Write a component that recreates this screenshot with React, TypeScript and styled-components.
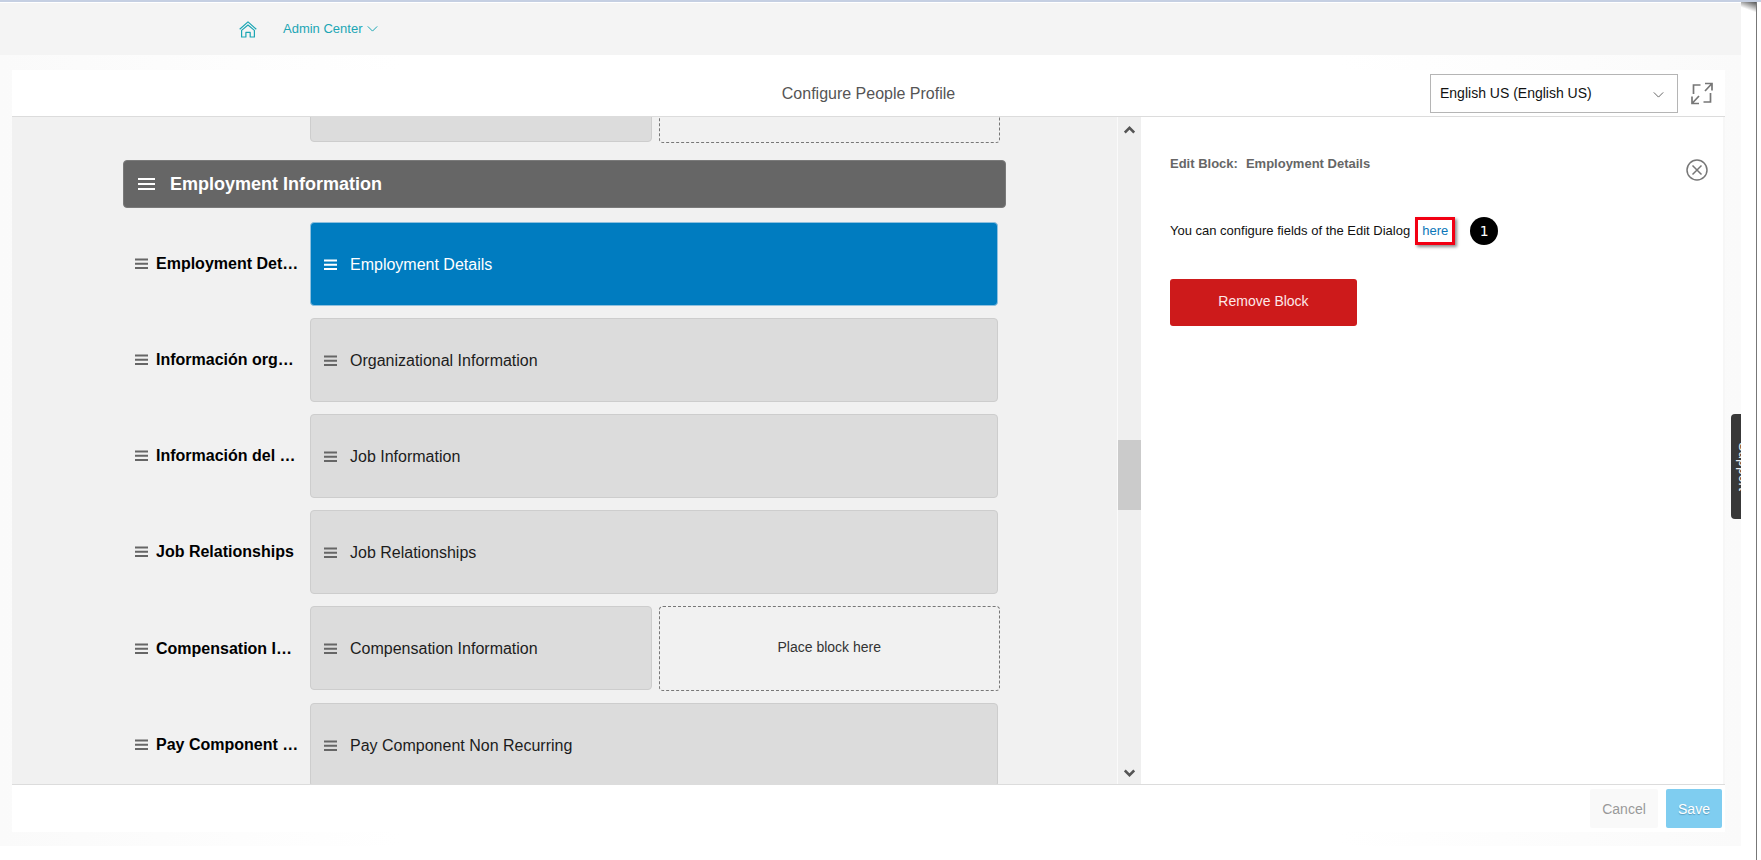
import React, { useLayoutEffect, useRef } from "react";
import styled, { createGlobalStyle, css } from "styled-components";

const GlobalStyle = createGlobalStyle`
  *, *::before, *::after { box-sizing: border-box; }
  body {
    margin: 0;
    background: #fff;
    color: #111;
    font-family: "Liberation Sans", Arial, sans-serif;
    font-size: 14px;
  }
  button, select { font: inherit; cursor: pointer; }
`;

const Page = styled.div`
  display: flex;
  flex-direction: column;
  height: 100vh;
  overflow: hidden;
  border-top: 2px solid #c5cfe2;
`;

const Columns = styled.div`
  flex: 1;
  min-height: 0;
  display: flex;
`;

const Frame = styled.div`
  position: relative;
  flex: 1;
  min-width: 0;
  display: flex;
  flex-direction: column;
  overflow: hidden;
  padding-bottom: 14px;
`;

const WindowEdge = styled.div`
  flex: none;
  width: 16px;
  margin-right: 4px;
  border-right: 1px solid #777;
  background: linear-gradient(200deg, #555 0, #fff 10px);
`;

const TopBar = styled.header`
  display: flex;
  align-items: center;
  gap: 26px;
  height: 53px;
  flex: none;
  padding: 0 240px 0 239px;
  border-top: 1px solid #fff;
  background: #f4f4f4;
  color: #1ba6b4;
`;

const HomeLink = styled.a`
  display: flex;
  padding-top: 1px;
  color: inherit;
`;

const NavButton = styled.button`
  display: flex;
  align-items: center;
  gap: 5px;
  padding: 0;
  border: 0;
  background: none;
  color: inherit;
  font-size: 13px;
  line-height: 16px;
`;

const Work = styled.main`
  flex: 1;
  min-height: 0;
  display: flex;
  flex-direction: column;
  padding: 15px 16px 14px 12px;
  background: linear-gradient(to right, #fafafa, #fff 400px, #fff calc(100% - 400px), #fafafa);
`;

const Panel = styled.section`
  flex: 1;
  min-height: 0;
  display: flex;
  flex-direction: column;
  background: #fff;
`;

const TitleBar = styled.div`
  display: grid;
  grid-template-columns: 1fr auto 1fr;
  align-items: center;
  height: 47px;
  flex: none;
  border-bottom: 1px solid #dcdcdc;
`;

const Title = styled.h1`
  grid-column: 2;
  margin: 0;
  padding-top: 2px;
  font-size: 16px;
  font-weight: 400;
  line-height: 20px;
  color: #555;
`;

const TitleTools = styled.div`
  display: flex;
  align-items: center;
  justify-content: flex-end;
  gap: 13px;
  padding-right: 12px;
`;

const SelectBox = styled.label`
  position: relative;
  display: block;
  width: 248px;
  color: #666;

  svg {
    position: absolute;
    right: 14px;
    top: 17px;
    pointer-events: none;
  }
`;

const LanguageSelect = styled.select`
  appearance: none;
  width: 100%;
  height: 39px;
  padding: 0 32px 0 9px;
  border: 1px solid #b5b5b5;
  border-radius: 0;
  background: #fff;
  color: #111;
`;

const IconButton = styled.button`
  display: flex;
  padding: 0;
  border: 0;
  background: none;
  color: #777;
`;

const Content = styled.div`
  flex: 1;
  min-height: 0;
  display: flex;
`;

const Canvas = styled.div`
  flex: 1;
  min-width: 0;
  overflow: hidden;
  padding: 0 111px;
  border-right: 1px solid #fafafa;
  background: #f1f1f1;
`;

const SectionBar = styled.h2`
  display: flex;
  align-items: center;
  gap: 15px;
  height: 48px;
  margin: 17px 0 14px;
  padding: 0 14px;
  border: 1px solid #7a7a7a;
  border-radius: 4px;
  background: #666;
  color: #fff;
  font-size: 18px;
  line-height: 22px;
`;

const Rows = styled.div`
  display: flex;
  flex-direction: column;
  gap: 12px;
`;

const Row = styled.div`
  display: flex;
  padding-right: 6px;
`;

const RowLabel = styled.div`
  flex: none;
  display: flex;
  align-items: center;
  gap: 8px;
  width: 187px;
  padding-left: 12px;
  color: #666;
`;

const RowName = styled.span`
  white-space: nowrap;
  color: #000;
  font-size: 16px;
  font-weight: 700;
  line-height: 20px;
`;

const Slots = styled.div<{ $split?: boolean }>`
  flex: 1;
  min-width: 0;
  display: grid;
  grid-template-columns: ${(p) => (p.$split ? "minmax(0, 1fr) minmax(0, 1fr)" : "minmax(0, 1fr)")};
  gap: 7px;
  margin-right: ${(p) => (p.$split ? "0" : "2px")};
`;

const Block = styled.button<{ $active?: boolean }>`
  display: flex;
  align-items: center;
  gap: 13px;
  height: 84px;
  padding: 1px 13px 0;
  border: 1px solid #cdcdcd;
  border-radius: 4px;
  background: #dcdcdc;
  color: #666;
  font-size: 16px;
  line-height: 20px;

  span { color: #1c1c1c; }

  ${(p) =>
    p.$active &&
    css`
      border-color: #8fc0de;
      background: #007cc0;
      color: #fff;
      span { color: #fff; }
    `}
`;

const DropSlot = styled.div`
  display: flex;
  align-items: center;
  justify-content: center;
  height: 85px;
  padding-bottom: 4px;
  border: 1px dashed #777;
  border-radius: 4px;
  color: #333;
  line-height: 16px;
`;

const Scrollbar = styled.div`
  flex: none;
  display: flex;
  flex-direction: column;
  align-items: center;
  width: 23px;
  padding: 9px 0 7px;
  background: #efefef;
  color: #555;
`;

const Track = styled.div`
  flex: 1;
  width: 100%;
  display: flex;
  flex-direction: column;
`;

const TrackGap = styled.div<{ $grow: number }>`
  flex: ${(p) => p.$grow} 1 0;
`;

const Thumb = styled.div`
  height: 70px;
  background: #cbcbcb;
`;

const Aside = styled.aside`
  flex: none;
  width: 584px;
  padding: 39px 15px 0 29px;
  border-right: 2px solid #f7f7f7;
  background: #fff;
`;

const AsideHead = styled.div`
  display: flex;
  justify-content: space-between;
  align-items: flex-end;
`;

const AsideTitle = styled.h3`
  display: flex;
  gap: 8px;
  margin: 0;
  padding-bottom: 9px;
  color: #666;
  font-size: 13px;
  line-height: 16px;
`;

const Hint = styled.p`
  display: flex;
  align-items: center;
  margin: 36px 0 34px;
  color: #111;
  font-size: 13px;
  line-height: 16px;
`;

const HintLink = styled.a`
  margin: 0 15px 0 5px;
  padding: 3px 4px 4px;
  border: 3px solid #f20013;
  box-shadow: 2px 2px 3px rgba(0, 0, 0, 0.45);
  color: #0b76b8;
  text-decoration: none;
  line-height: 15px;
`;

const StepBadge = styled.span`
  display: flex;
  align-items: center;
  justify-content: center;
  width: 28px;
  height: 28px;
  border-radius: 50%;
  background: #000;
  color: #fff;
  font-family: "DejaVu Sans", sans-serif;
  font-size: 14px;
`;

const RemoveButton = styled.button`
  width: 187px;
  height: 47px;
  padding: 0 0 3px;
  border: 0;
  border-radius: 3px;
  background: #cd1a1b;
  color: #fde8e8;
`;

const Footer = styled.footer`
  flex: none;
  display: flex;
  justify-content: flex-end;
  gap: 8px;
  padding: 4px 3px;
  border-top: 1px solid #dcdcdc;
`;

const FooterButton = styled.button<{ $primary?: boolean }>`
  height: 39px;
  width: ${(p) => (p.$primary ? "56px" : "68px")};
  padding: 0;
  border: 0;
  border-radius: 2px;
  background: ${(p) => (p.$primary ? "#7fcdf0" : "#f9f9f9")};
  color: ${(p) => (p.$primary ? "#fff" : "#999")};
  text-shadow: ${(p) => (p.$primary ? "0 1px 1px #5b9cbc" : "none")};
`;

const SupportTab = styled.button`
  position: absolute;
  top: 412px;
  right: -22px;
  width: 32px;
  height: 105px;
  padding: 0 0 0 5px;
  border: 0;
  border-radius: 4px;
  background: #383838;
  color: #eee;
  text-align: center;
  writing-mode: vertical-rl;
  display: flex;
  flex-direction: column;
  align-items: center;
  justify-content: flex-end;
  line-height: 16px;
`;

const Bars = ({ large }: { large?: boolean }) =>
  large ? (
    <svg width="17" height="14" viewBox="0 0 17 14" fill="currentColor" aria-hidden="true">
      <path d="M0 1h17v2H0zM0 6h17v2H0zM0 11h17v2H0z" />
    </svg>
  ) : (
    <svg width="13" height="12" viewBox="0 0 13 12" fill="none" stroke="currentColor" strokeWidth="1.9" aria-hidden="true">
      <path d="M0 1.5h13M0 5.8h13M0 10h13" />
    </svg>
  );

const Chevron = ({ up, bold }: { up?: boolean; bold?: boolean }) => (
  <svg width="11" height="8" viewBox="0 0 11 8" fill="none" stroke="currentColor" strokeWidth={bold ? 2.6 : 1} aria-hidden="true">
    <path d={up ? "M0.8 6.6 5.5 1.9 10.2 6.6" : "M0.8 1.4 5.5 6.1 10.2 1.4"} />
  </svg>
);

const HomeIcon = () => (
  <svg width="18" height="17" viewBox="0 0 18 17" fill="none" stroke="currentColor" strokeWidth="1.2" strokeLinejoin="round" aria-hidden="true">
    <path d="M0.7 8.2 9 0.9l8.3 7.3" />
    <path d="M2.6 9.4 9 4l6.4 5.4V16h-4.2v-4.6H6.9V16H2.6z" />
  </svg>
);

const ExpandIcon = () => (
  <svg width="22" height="23" viewBox="0 0 22 23" fill="none" stroke="currentColor" strokeWidth="1.7" aria-hidden="true">
    <path d="M2.5 12V3h7M19.5 11v9h-7M14 1.5h7v7M21 1.5l-7 7.5M1 14.5v7h7M1 21.5l7-7.5" />
  </svg>
);

const CloseIcon = () => (
  <svg width="22" height="22" viewBox="0 0 22 22" fill="none" stroke="currentColor" strokeWidth="1.5" aria-hidden="true">
    <circle cx="11" cy="11" r="10" />
    <path d="M6.5 6.5l9 9M15.5 6.5l-9 9" />
  </svg>
);

const rows = [
  { name: "Employment Det…", block: "Employment Details", active: true },
  { name: "Información org…", block: "Organizational Information" },
  { name: "Información del …", block: "Job Information" },
  { name: "Job Relationships", block: "Job Relationships" },
  { name: "Compensation I…", block: "Compensation Information", split: true },
  { name: "Pay Component …", block: "Pay Component Non Recurring" },
];

export default function App() {
  const canvas = useRef<HTMLDivElement>(null);

  useLayoutEffect(() => {
    if (canvas.current) canvas.current.scrollTop = 59;
  }, []);

  return (
    <Page>
      <GlobalStyle />
      <Columns>
        <Frame>
          <TopBar>
            <HomeLink href="#home" aria-label="Home">
              <HomeIcon />
            </HomeLink>
            <NavButton>
              Admin Center
              <Chevron />
            </NavButton>
          </TopBar>
          <Work>
            <Panel>
              <TitleBar>
                <Title>Configure People Profile</Title>
                <TitleTools>
                  <SelectBox>
                    <LanguageSelect aria-label="Language">
                      <option>English US (English US)</option>
                    </LanguageSelect>
                    <Chevron />
                  </SelectBox>
                  <IconButton aria-label="Full screen">
                    <ExpandIcon />
                  </IconButton>
                </TitleTools>
              </TitleBar>
              <Content>
                <Canvas ref={canvas}>
                  <Row>
                    <RowLabel />
                    <Slots $split>
                      <Block aria-label="Block" />
                      <DropSlot />
                    </Slots>
                  </Row>
                  <SectionBar>
                    <Bars large />
                    Employment Information
                  </SectionBar>
                  <Rows>
                    {rows.map((row) => (
                      <Row key={row.name}>
                        <RowLabel>
                          <Bars />
                          <RowName>{row.name}</RowName>
                        </RowLabel>
                        <Slots $split={row.split}>
                          <Block $active={row.active}>
                            <Bars />
                            <span>{row.block}</span>
                          </Block>
                          {row.split && <DropSlot>Place block here</DropSlot>}
                        </Slots>
                      </Row>
                    ))}
                  </Rows>
                </Canvas>
                <Scrollbar>
                  <Chevron up bold />
                  <Track>
                    <TrackGap $grow={307} />
                    <Thumb />
                    <TrackGap $grow={259} />
                  </Track>
                  <Chevron bold />
                </Scrollbar>
                <Aside>
                  <AsideHead>
                    <AsideTitle>
                      <span>Edit Block:</span>
                      <span>Employment Details</span>
                    </AsideTitle>
                    <IconButton aria-label="Close">
                      <CloseIcon />
                    </IconButton>
                  </AsideHead>
                  <Hint>
                    You can configure fields of the Edit Dialog
                    <HintLink href="#edit-dialog">here</HintLink>
                    <StepBadge>1</StepBadge>
                  </Hint>
                  <RemoveButton>Remove Block</RemoveButton>
                </Aside>
              </Content>
              <Footer>
                <FooterButton>Cancel</FooterButton>
                <FooterButton $primary>Save</FooterButton>
              </Footer>
            </Panel>
          </Work>
          <SupportTab>Support</SupportTab>
        </Frame>
        <WindowEdge />
      </Columns>
    </Page>
  );
}
